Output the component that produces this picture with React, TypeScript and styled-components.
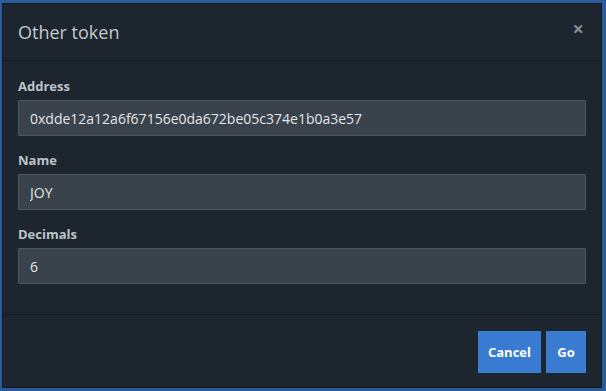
import React from 'react';
import styled, { createGlobalStyle } from 'styled-components';

const GlobalStyle = createGlobalStyle`
    html, body {
        margin: 0;
        padding: 0;
        background: #2a5c9c;
        height: 391px;
        overflow: hidden;
    }
    * {
        box-sizing: border-box;
    }
`;

const fields = [
    { label: 'Address', value: '0xdde12a12a6f67156e0da672be05c374e1b0a3e57' },
    { label: 'Name', value: 'JOY' },
    { label: 'Decimals', value: '6' },
];

const App: React.FC = () => {
    return (
        <Page>
            <GlobalStyle />
            <Modal>
                <Header>
                    <Title>Other token</Title>
                    <CloseButton aria-label="Close">×</CloseButton>
                </Header>
                <Body>
                    {fields.map(field => (
                        <FormGroup key={field.label}>
                            <Label>{field.label}</Label>
                            <Input defaultValue={field.value} />
                        </FormGroup>
                    ))}
                </Body>
                <Footer>
                    <Button>Cancel</Button>
                    <Button>Go</Button>
                </Footer>
            </Modal>
        </Page>
    );
};

export default App;

/**
|--------------------------------------------------
| Style
|--------------------------------------------------
*/

const FONT = `"Open Sans", "Liberation Sans", sans-serif`;

const Page = styled.div`
    padding: 3px 4px 3px 2px;
    font-family: ${FONT};
`;

const Modal = styled.div`
    width: 600px;
    height: 385px;
    display: flex;
    flex-direction: column;
    background-color: #1d252e;
    border: 1px solid #141a21;
`;

const Header = styled.div`
    height: 57px;
    display: flex;
    align-items: center;
    justify-content: space-between;
    padding: 0 17px 0 15px;
    border-bottom: 1px solid #151b22;
`;

const Title = styled.h4`
    margin: 0;
    font-size: 18px;
    font-weight: 400;
    color: #c3c9cf;
`;

const CloseButton = styled.span`
    font-size: 20px;
    font-weight: 700;
    line-height: 1;
    color: #858c93;
    margin-top: -6px;
`;

const Body = styled.div`
    flex: 1;
    padding: 16px 15px 0;
`;

const FormGroup = styled.div`
    margin-bottom: 15px;
`;

const Label = styled.label`
    display: block;
    height: 18px;
    margin-bottom: 5px;
    font-size: 13px;
    line-height: 18px;
    font-weight: 700;
    color: #bcc3c9;
`;

const Input = styled.input`
    display: block;
    width: 100%;
    height: 36px;
    padding: 0 11px;
    background-color: #3a424b;
    border: 1px solid #4d555e;
    border-radius: 1px;
    color: #e2e6ea;
    font-family: ${FONT};
    font-size: 14px;
    outline: none;
`;

const Footer = styled.div`
    display: flex;
    justify-content: flex-end;
    gap: 5px;
    padding: 16px 15px 14px;
    border-top: 1px solid #151b22;
`;

const Button = styled.button`
    height: 42px;
    min-width: 40px;
    padding: 0 10px;
    background-color: #3a7bd2;
    border: none;
    border-radius: 0;
    color: #ffffff;
    font-family: ${FONT};
    font-size: 13px;
    font-weight: 700;
    cursor: pointer;
`;
